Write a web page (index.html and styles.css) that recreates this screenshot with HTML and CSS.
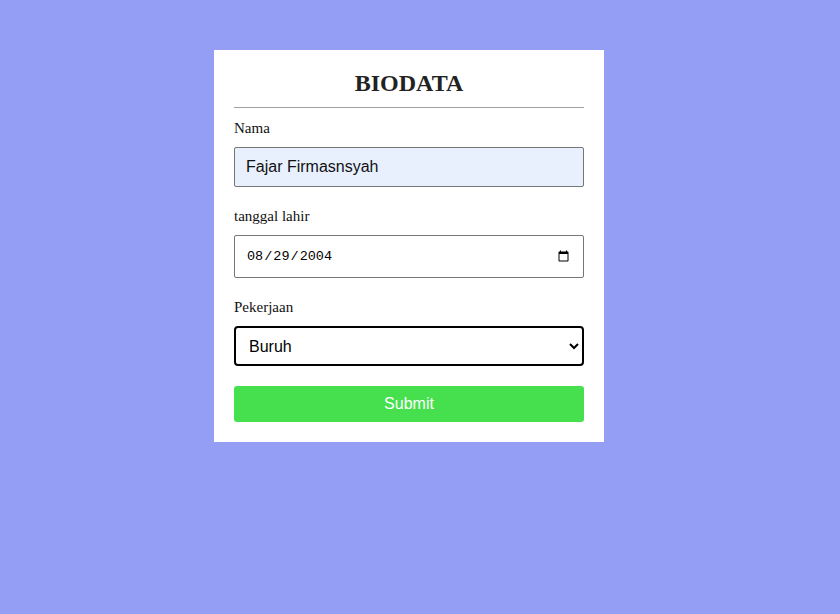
FILE: index.html
```html
<!DOCTYPE html>
<html>
<head>
<meta charset="utf-8">
<title>Biodata</title>
<link rel="stylesheet" href="styles.css">
</head>
<body>
<div class="card">
  <h1 class="title">BIODATA</h1>
  <hr class="rule">
  <form class="form">
    <div class="field">
      <label class="label" for="nama">Nama</label>
      <input class="control text" id="nama" type="text" value="Fajar Firmasnsyah">
    </div>
    <div class="field">
      <label class="label" for="tgl">tanggal lahir</label>
      <input class="control date" id="tgl" type="date" value="2004-08-29">
    </div>
    <div class="field">
      <label class="label" for="kerja">Pekerjaan</label>
      <select class="control select" id="kerja">
        <option>Buruh</option>
        <option>Petani</option>
        <option>Guru</option>
      </select>
    </div>
    <button class="submit" type="button">Submit</button>
  </form>
</div>
</body>
</html>
```

FILE: styles.css
```css
html, body {
  margin: 0;
  padding: 0;
}
body {
  background: #949ef5;
  min-height: 614px;
  font-family: "Liberation Serif", "Times New Roman", serif;
  color: #222;
}
.card {
  box-sizing: border-box;
  width: 390px;
  margin: 50px 0 0 214px;
  padding: 20px;
  background: #fff;
}
.title {
  margin: 0;
  font-size: 24px;
  font-weight: bold;
  text-align: center;
  line-height: normal;
  color: #222;
}
.rule {
  margin: 10px 0 0;
  border: 0;
  border-top: 1px solid #a0a0a0;
  height: 0;
}
.form {
  display: flex;
  flex-direction: column;
  margin-top: 12px;
}
.field {
  display: flex;
  flex-direction: column;
  margin-bottom: 21px;
}
.field:last-of-type {
  margin-bottom: 20px;
}
.label {
  font-size: 15px;
  line-height: 17px;
  margin-bottom: 10px;
  color: #111;
}
.control {
  box-sizing: border-box;
  width: 100%;
  margin: 0;
  font-family: "Liberation Sans", Arial, sans-serif;
  font-size: 16px;
  color: #000;
}
.text {
  height: 40px;
  padding: 0 11px;
  border: 1px solid #767676;
  border-radius: 2px;
  background: #e8f0fe;
  color: #111;
}
.date {
  height: 43px;
  padding: 0 11px;
  border: 1px solid #767676;
  border-radius: 2px;
  background: #fff;
  font-family: "Liberation Mono", monospace;
  font-size: 13.5px;
}
.select {
  height: 40px;
  padding: 0 8px 0 9px;
  border: 2px solid #000;
  border-radius: 4px;
  background: #fff;
  outline: none;
}
.submit {
  height: 36px;
  width: 100%;
  border: 0;
  border-radius: 3px;
  background: #46e04e;
  color: #fff;
  font-family: "Liberation Sans", Arial, sans-serif;
  font-size: 16px;
  cursor: pointer;
}
```
